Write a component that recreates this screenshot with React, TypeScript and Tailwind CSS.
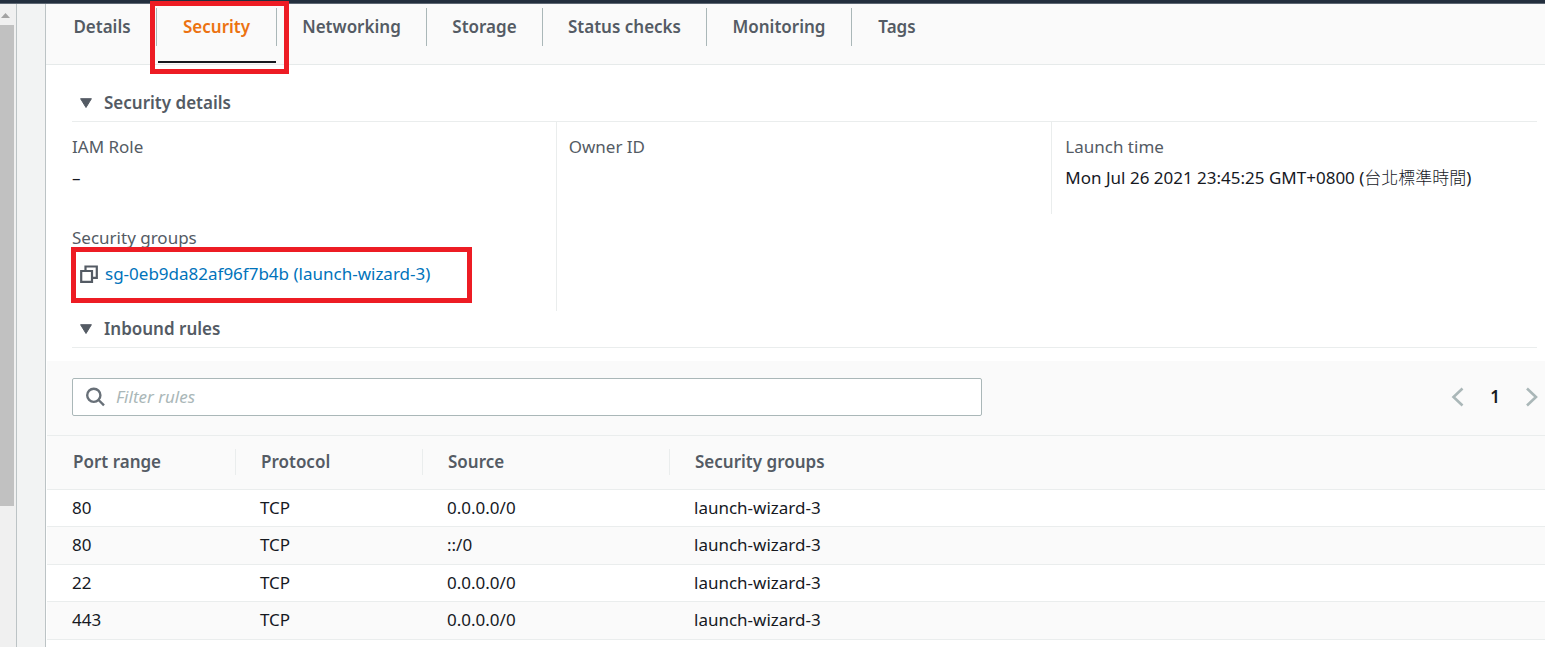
import type { ReactNode } from "react";

const tabs = [
  { label: "Details", width: "w-[109px]" },
  { label: "Security", width: "w-[120px]" },
  { label: "Networking", width: "w-[150px]" },
  { label: "Storage", width: "w-[116px]" },
  { label: "Status checks", width: "w-[164px]" },
  { label: "Monitoring", width: "w-[145px]" },
  { label: "Tags", width: "w-[90px]" },
];

const rules = [
  { port: "80", protocol: "TCP", source: "0.0.0.0/0", group: "launch-wizard-3" },
  { port: "80", protocol: "TCP", source: "::/0", group: "launch-wizard-3" },
  { port: "22", protocol: "TCP", source: "0.0.0.0/0", group: "launch-wizard-3" },
  { port: "443", protocol: "TCP", source: "0.0.0.0/0", group: "launch-wizard-3" },
];

const columns = [
  { label: "Port range", width: "w-[189px]" },
  { label: "Protocol", width: "w-[187px]" },
  { label: "Source", width: "w-[247px]" },
  { label: "Security groups", width: "w-auto" },
];

function ScrollRail() {
  return (
    <div aria-hidden="true" className="flex w-4 shrink-0 flex-col bg-[#f0f0f0] pt-2">
      <svg className="h-[13px] w-[11px]" viewBox="0 0 11 13">
        <path d="M1 6 L5.5 1 L10 6 Z" fill="#a3a3a3" />
      </svg>
      <div className="h-[481px] w-[14px] bg-[#c1c1c1]" />
    </div>
  );
}

function SectionHeading({ children }: { children: ReactNode }) {
  return (
    <h2 className="border-b border-[#eaeded] font-semibold text-[#545b64]">
      <button type="button" className="flex h-9 items-center gap-3 pl-2">
        <svg className="h-3 w-3" viewBox="0 0 12 12" aria-hidden="true">
          <path d="M0.6 1.7 H11.4 L6 10.5 Z" fill="#545b64" stroke="#545b64" strokeLinejoin="round" />
        </svg>
        {children}
      </button>
    </h2>
  );
}

function CopyIcon() {
  return (
    <svg className="h-[18px] w-[18px]" viewBox="0 0 18 18" fill="none" stroke="#545b64" strokeWidth="2.2" aria-hidden="true">
      <path d="M1.2 6 H12 V16.8 H1.2 Z" />
      <path d="M5.5 6 V1.5 H16.8 V12.8 H12" />
    </svg>
  );
}

export default function App() {
  return (
    <div className="flex min-h-screen flex-col overflow-hidden bg-white font-['Noto_Sans','Noto_Sans_CJK_TC',sans-serif] text-[17px] leading-6 text-[#16191f]">
      <header className="h-1 border-b border-[#5d6773] bg-[#232f3e]" />
      <div className="flex flex-1">
        <ScrollRail />
        <div className="w-[30px] shrink-0 border-x border-[#bcc3c5] bg-[#f2f3f3]" />
        <main className="min-w-0 flex-1">
          <nav className="flex h-[61px] border-b border-[#e6eaea] bg-[#fafafa] pt-1 pl-[2px]">
            {tabs.map((tab) => {
              const active = tab.label === "Security";
              return (
                <div key={tab.label} className={`relative shrink-0 ${tab.width}`}>
                  <button
                    type="button"
                    className={`flex h-[38px] w-full items-center justify-center font-semibold ${
                      tab.label === "Tags" ? "" : "border-r border-[#aab7b8]"
                    } ${active ? "text-[#ec7211]" : "text-[#545b64]"}`}
                  >
                    {tab.label}
                  </button>
                  {active && (
                    <>
                      <div className="absolute top-[53px] right-px left-px h-[2px] bg-[#16191f]" />
                      <div className="pointer-events-none absolute -top-[7px] -right-3 -left-[7px] z-10 h-[73px] border-5 border-[#ed1c24]" />
                    </>
                  )}
                </div>
              );
            })}
          </nav>

          <section className="pt-5 pr-2 pl-[26px]">
            <SectionHeading>Security details</SectionHeading>
            <dl className="-mr-[10px] -ml-3 grid grid-cols-3 items-start">
              <div className="flex h-[189px] flex-col pt-[13px] pl-3">
                <dt className="text-[#545b64]">IAM Role</dt>
                <dd className="mt-[7px]">–</dd>
                <dt className="mt-[36px] text-[#545b64]">Security groups</dt>
                <dd className="relative mt-3 flex items-center gap-[7px] pl-2">
                  <button type="button" aria-label="Copy security group">
                    <CopyIcon />
                  </button>
                  <a href="#sg-0eb9da82af96f7b4b" className="text-[#0073bb]">
                    sg-0eb9da82af96f7b4b (launch-wizard-3)
                  </a>
                  <div className="pointer-events-none absolute -top-[15px] -left-px h-14 w-[401px] border-5 border-[#ed1c24]" />
                </dd>
              </div>
              <div className="h-[189px] border-l border-[#eaeded] pt-[13px] pl-3">
                <dt className="text-[#545b64]">Owner ID</dt>
                <dd />
              </div>
              <div className="h-[92px] border-l border-[#eaeded] pt-[13px] pl-[13px]">
                <dt className="text-[#545b64]">Launch time</dt>
                <dd className="mt-[7px] whitespace-nowrap">
                  Mon Jul 26 2021 23:45:25 GMT+0800 (<span className="font-light">台北標準時間</span>)
                </dd>
              </div>
            </dl>
            <SectionHeading>Inbound rules</SectionHeading>
          </section>

          <section className="mt-[13px] ml-px">
            <div className="flex h-[75px] items-center justify-between border-b border-[#eaeded] bg-[#fafafa] pr-[6px] pb-[3px] pl-[25px]">
              <label className="flex h-[38px] w-[910px] items-center gap-[10px] rounded-xs border border-[#aab7b8] bg-white pl-[13px]">
                <svg className="h-5 w-5 shrink-0" viewBox="0 0 20 20" fill="none" stroke="#687078" strokeWidth="2.4" aria-hidden="true">
                  <circle cx="7.8" cy="8.3" r="6.6" />
                  <path d="M12.6 13 L18 18.3" />
                </svg>
                <input
                  type="search"
                  aria-label="Filter rules"
                  placeholder="Filter rules"
                  className="w-full bg-transparent outline-none placeholder:text-[#aab7b8] placeholder:italic"
                />
              </label>
              <div className="flex items-center">
                <button type="button" aria-label="Previous page">
                  <svg className="h-5 w-[14px]" viewBox="0 0 14 20" fill="none" stroke="#aab7b8" strokeWidth="2.6" aria-hidden="true">
                    <path d="M11.5 1.5 L2.5 10 L11.5 18.5" />
                  </svg>
                </button>
                <button type="button" className="w-[60px] text-center font-semibold">
                  1
                </button>
                <button type="button" aria-label="Next page">
                  <svg className="h-5 w-[14px]" viewBox="0 0 14 20" fill="none" stroke="#aab7b8" strokeWidth="2.6" aria-hidden="true">
                    <path d="M2 1.5 L11 10 L2 18.5" />
                  </svg>
                </button>
              </div>
            </div>

            <table className="w-full table-fixed border-separate border-spacing-0 text-left">
              <thead>
                <tr className="bg-[#fafafa] text-[#545b64]">
                  {columns.map((column) => (
                    <th key={column.label} className={`h-[54px] border-b border-[#eaeded] p-0 pb-[2px] font-semibold ${column.width}`}>
                      <div
                        className={`flex h-[26px] items-center ${column.label === "Port range" ? "pl-[26px]" : "pl-[25px]"} ${
                          column.label === "Security groups" ? "" : "border-r border-[#eaeded]"
                        }`}
                      >
                        {column.label}
                      </div>
                    </th>
                  ))}
                </tr>
              </thead>
              <tbody>
                {rules.map((rule, index) => (
                  <tr key={index} className="h-[37px] even:h-[38px] even:bg-[#fafafa]">
                    <td className="border-b border-[#eaeded] pt-0 pb-px pl-[25px]">{rule.port}</td>
                    <td className="border-b border-[#eaeded] pt-0 pb-px pl-6">{rule.protocol}</td>
                    <td className="border-b border-[#eaeded] pt-0 pb-px pl-6">{rule.source}</td>
                    <td className="border-b border-[#eaeded] pt-0 pb-px pl-6">{rule.group}</td>
                  </tr>
                ))}
              </tbody>
            </table>
          </section>
        </main>
      </div>
    </div>
  );
}
